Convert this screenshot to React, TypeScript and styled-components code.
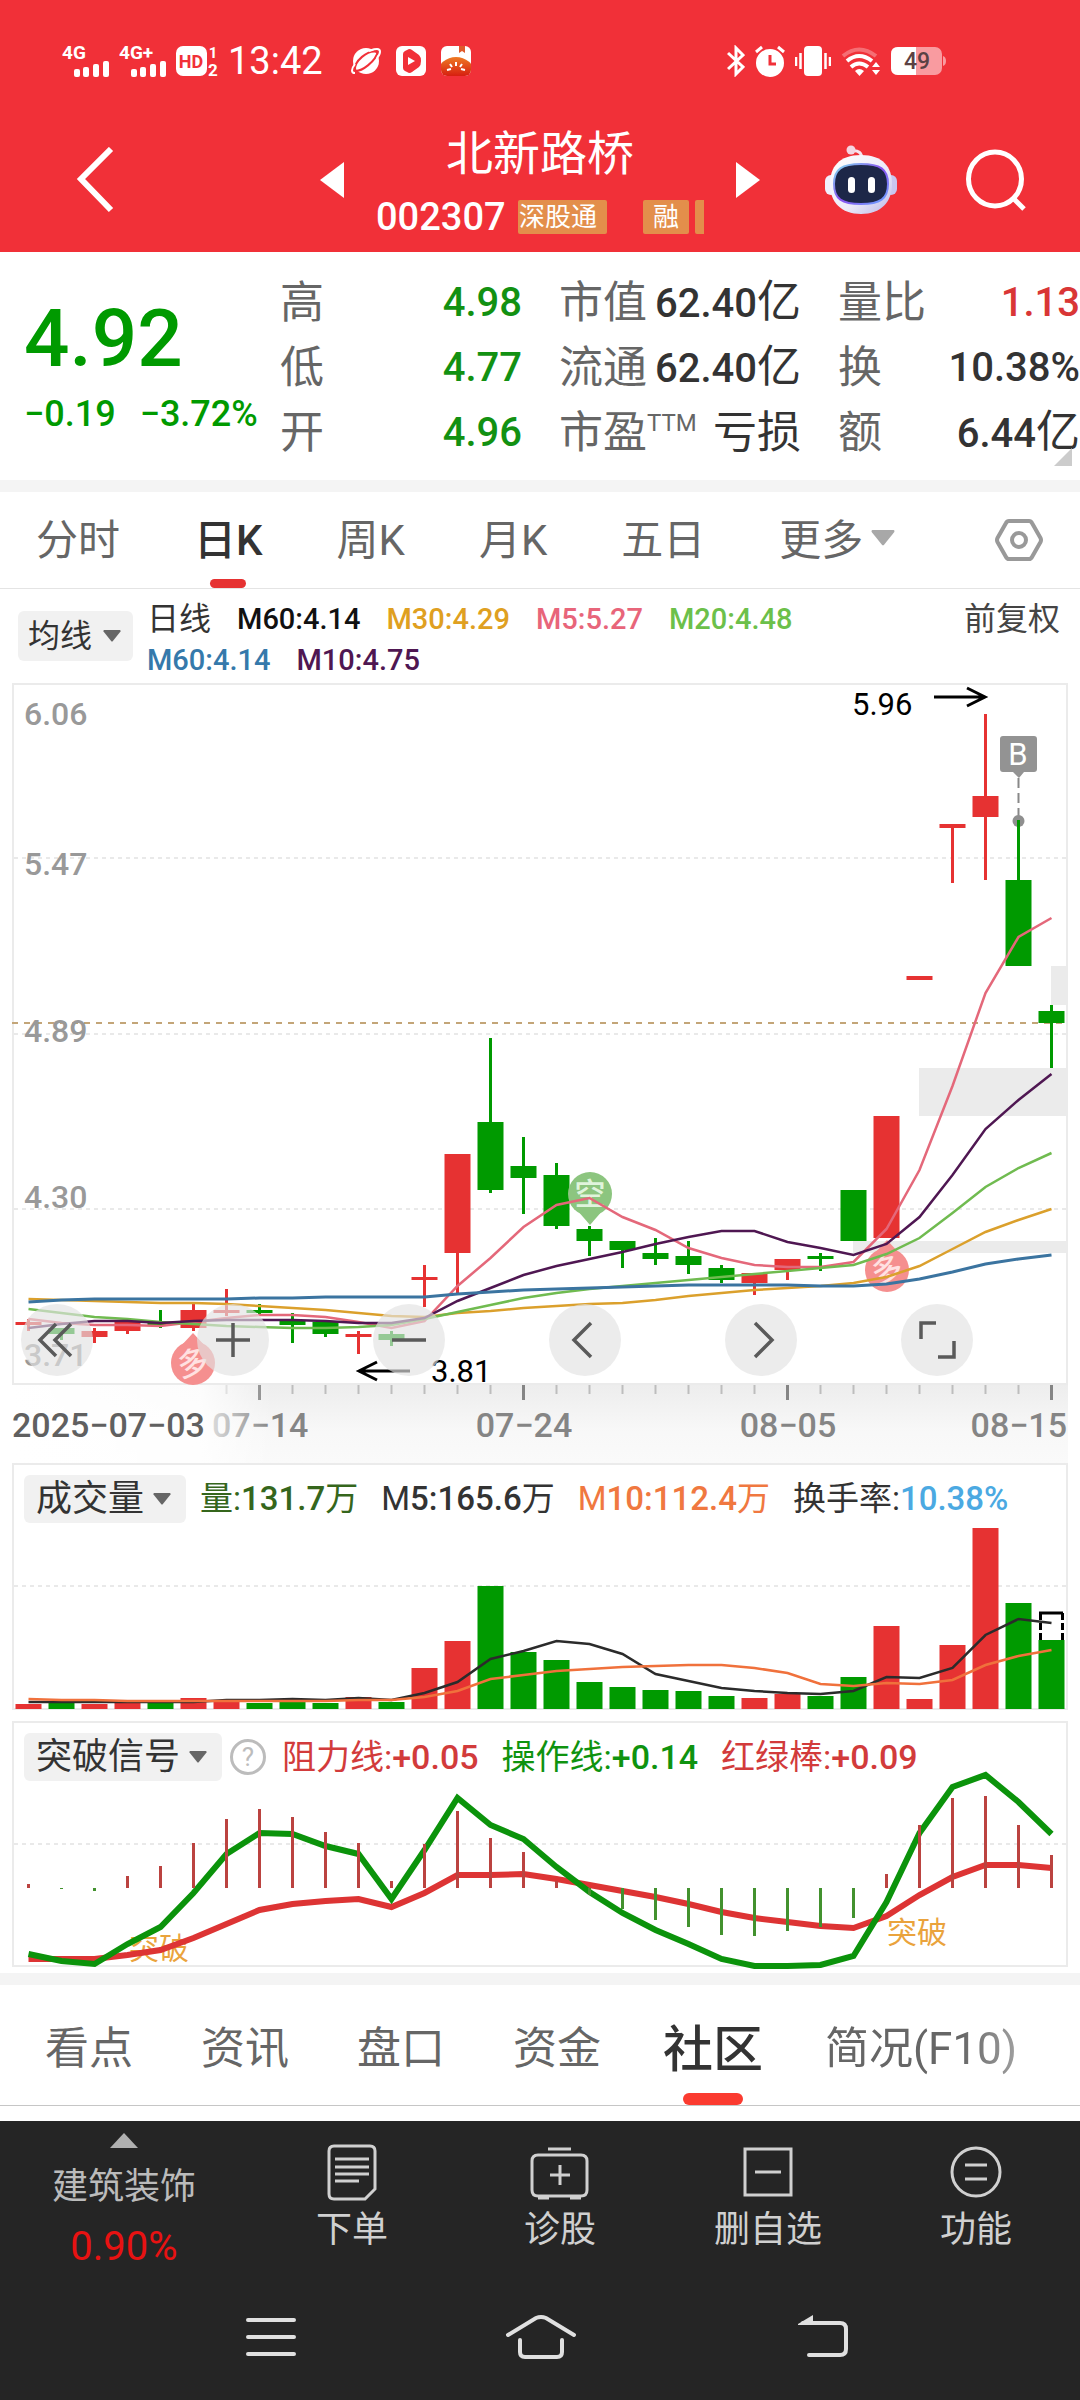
import React from 'react';
import styled, { createGlobalStyle, css } from 'styled-components';

const RED = '#e63232';
const GREEN = '#009a00';
const INK = '#333333';
const MUTED = '#666666';

const GlobalStyle = createGlobalStyle`
  *, *::before, *::after { box-sizing: border-box; }
  body {
    margin: 0;
    background: #ffffff;
    color: ${INK};
    font-family: Roboto, 'Noto Sans CJK SC', sans-serif;
  }
  h1, dl, dd, dt, ul, p { margin: 0; padding: 0; }
  ul { list-style: none; }
  svg { display: block; flex: none; }
`;

const plainButton = css`
  display: flex;
  align-items: center;
  justify-content: center;
  margin: 0;
  padding: 0;
  border: 0;
  background: none;
  color: inherit;
  font: inherit;
  cursor: pointer;
`;

const IconButton = styled.button`
  ${plainButton}
`;

/* ---------- header ---------- */

const Header = styled.header`
  background: #f13038;
  color: #ffffff;
`;

const StatusBar = styled.div`
  display: flex;
  align-items: center;
  justify-content: space-between;
  height: 122px;
  padding: 0 134px 0 62px;
`;

const StatusGroup = styled.div`
  display: flex;
  align-items: center;
  gap: 10px;
`;

const AppIcons = styled.div`
  display: flex;
  gap: 15px;
  margin-left: 18px;
`;

const Clock = styled.time`
  font-size: 38px;
  line-height: 46px;
`;

const TitleBar = styled.div`
  display: grid;
  grid-template-columns: 1fr auto 1fr;
  align-items: center;
  height: 130px;
  padding: 0 54px 14px 76px;
`;

const StockSwitch = styled.div`
  display: flex;
  align-items: center;
  gap: 32px;
  margin-left: -22px;
`;

const StockInfo = styled.div`
  display: flex;
  flex-direction: column;
  gap: 12px;
  width: 328px;
  margin-bottom: -6px;
`;

const StockName = styled.h1`
  font-size: 47px;
  font-weight: 400;
  line-height: 56px;
  text-align: center;
`;

const CodeRow = styled.div`
  display: flex;
  align-items: center;
  height: 46px;
  overflow: hidden;
`;

const Code = styled.span`
  flex: none;
  width: 142px;
  font-size: 38px;
  font-weight: 500;
  line-height: 46px;
`;

const Tag = styled.span<{ $flush?: boolean }>`
  flex: none;
  height: 34px;
  margin-right: ${(p) => (p.$flush ? 36 : 6)}px;
  padding: 0 10px 0 ${(p) => (p.$flush ? 1 : 10)}px;
  border-radius: 2px;
  background: #e38e4b;
  font-size: 26px;
  line-height: 34px;
`;

const HeaderActions = styled.div`
  display: flex;
  align-items: center;
  justify-content: flex-end;
  gap: 68px;
`;

/* ---------- quote ---------- */

const Quote = styled.section`
  position: relative;
  display: grid;
  grid-template-columns: 280px 1fr;
  height: 228px;
`;

const PriceBlock = styled.div`
  padding: 47px 0 0 24px;
  color: ${GREEN};
  font-weight: 500;
  white-space: nowrap;
`;

const Price = styled.p`
  font-size: 80px;
  line-height: 80px;
`;

const Change = styled.p`
  display: flex;
  gap: 24px;
  margin-top: 13px;
  font-size: 36px;
  line-height: 44px;
`;

const Stats = styled.dl`
  display: grid;
  grid-template-columns: repeat(3, 1fr);
  grid-auto-rows: 65px;
  column-gap: 37px;
  padding-top: 18px;
`;

const Stat = styled.div`
  display: flex;
  align-items: center;
  justify-content: space-between;
  white-space: nowrap;
`;

const StatLabel = styled.dt`
  display: flex;
  color: ${MUTED};
  font-size: 44px;
  line-height: 66px;
`;

const Small = styled.small`
  font-size: 24px;
  line-height: 46px;
`;

const StatValue = styled.dd<{ $color?: string; $plain?: boolean }>`
  color: ${(p) => p.$color ?? INK};
  font-size: ${(p) => (p.$plain ? 44 : 40)}px;
  font-weight: ${(p) => (p.$plain ? 400 : 500)};
  line-height: 66px;
`;

const Unit = styled.span`
  font-size: 44px;
  font-weight: 400;
`;

const Corner = styled.i`
  position: absolute;
  right: 8px;
  bottom: 14px;
  border: 9px solid #cccccc;
  border-top-color: transparent;
  border-left-color: transparent;
`;

const Band = styled.div`
  height: 12px;
  background: #f4f4f4;
`;

/* ---------- tabs ---------- */

const PeriodTabs = styled.nav`
  display: flex;
  align-items: stretch;
  gap: 74px;
  height: 97px;
  padding: 0 36px;
  border-bottom: 1px solid #e4e4e4;
`;

const PeriodTab = styled.button<{ $active?: boolean }>`
  ${plainButton}
  position: relative;
  gap: 8px;
  color: ${(p) => (p.$active ? INK : MUTED)};
  font-size: 42px;
  font-weight: ${(p) => (p.$active ? 500 : 400)};
  line-height: 98px;
  align-items: flex-start;
  svg { margin-top: 38px; }
  white-space: nowrap;
  &::after {
    content: '';
    display: ${(p) => (p.$active ? 'block' : 'none')};
    position: absolute;
    bottom: 0;
    left: calc(50% - 18px);
    width: 36px;
    height: 9px;
    border-radius: 5px;
    background: ${RED};
  }
`;

const Settings = styled(IconButton)`
  margin-left: auto;
`;

/* ---------- indicators ---------- */

const SelectBox = styled.label<{ $large?: boolean }>`
  position: relative;
  flex: none;
  height: ${(p) => (p.$large ? 48 : 50)}px;
  select {
    height: 100%;
    margin: 0;
    padding: ${(p) => (p.$large ? '0 41px 0 12px' : '0 40px 0 10px')};
    border: 0;
    border-radius: 6px;
    appearance: none;
    background: #f1f1f1;
    color: ${INK};
    font: inherit;
    font-size: ${(p) => (p.$large ? 36 : 32)}px;
  }
  svg {
    position: absolute;
    top: calc(50% - 6px);
    right: ${(p) => (p.$large ? 15 : 12)}px;
    pointer-events: none;
  }
`;

const Averages = styled.section`
  display: flex;
  align-items: flex-start;
  height: 94px;
  padding: 10px 20px 0 18px;
`;

const AverageSelect = styled.div`
  display: flex;
  padding-top: 12px;
`;

const Legend = styled.ul`
  display: flex;
  flex: 1;
  flex-wrap: wrap;
  column-gap: 26px;
  margin: 0 48px 0 14px;
`;

const LegendItem = styled.li<{ $color: string }>`
  color: ${(p) => p.$color};
  font-size: ${(p) => (p.$color === INK ? 32 : 29)}px;
  font-weight: ${(p) => (p.$color === INK ? 400 : 500)};
  line-height: 41px;
`;

const Adjust = styled.button`
  ${plainButton}
  color: #444444;
  font-size: 32px;
  line-height: 41px;
`;

const Frame = styled.section`
  position: relative;
  margin: 0 12px;
  border: 2px solid #ebebeb;
`;

const Plot = styled.svg`
  width: 100%;
  height: auto;
  overflow: visible;
`;

const Axis = styled.div`
  margin: 0 12px;
`;

const Tools = styled.div`
  position: absolute;
  left: 7px;
  right: 93px;
  bottom: 7px;
  display: flex;
  justify-content: space-between;
`;

const Tool = styled.button`
  ${plainButton}
  width: 72px;
  height: 72px;
  border-radius: 50%;
  background: rgba(226, 226, 226, 0.66);
`;

const PanelHead = styled.div`
  display: flex;
  align-items: center;
  height: 62px;
  padding: 6px 10px 0;
`;

const PanelValues = styled.ul<{ $size: number }>`
  display: flex;
  gap: 23px;
  margin-left: 14px;
  font-size: ${(p) => p.$size}px;
  line-height: 50px;
  white-space: nowrap;
`;

const PanelValue = styled.li<{ $color: string }>`
  color: ${(p) => p.$color};
  b { font-weight: 500; }
`;

const PercentText = styled.b`
  color: #4ba9e2;
`;

const Help = styled(IconButton)`
  width: 36px;
  height: 36px;
  margin: 0 2px 0 8px;
  border: 3px solid #bcbcbc;
  border-radius: 50%;
  color: #bcbcbc;
  font-size: 26px;
  line-height: 30px;
`;

const Panel = styled(Frame)<{ $space: number }>`
  margin-bottom: ${(p) => p.$space}px;
`;

/* ---------- bottom ---------- */

const InfoTabs = styled.nav`
  display: flex;
  height: 121px;
  padding-left: 11px;
  border-bottom: 1px solid #c6c6c6;
  overflow: hidden;
`;

const InfoTab = styled.button<{ $active?: boolean; $fade?: boolean }>`
  ${plainButton}
  position: relative;
  flex: none;
  padding: 0 ${(p) => (p.$active ? 28 : 34)}px;
  color: ${(p) => (p.$active ? INK : MUTED)};
  font-size: ${(p) => (p.$active ? 50 : 44)}px;
  font-weight: ${(p) => (p.$active ? 500 : 400)};
  mask-image: ${(p) => (p.$fade ? 'linear-gradient(to right, #000 65%, rgba(0, 0, 0, 0.4))' : 'none')};
  &::after {
    content: '';
    display: ${(p) => (p.$active ? 'block' : 'none')};
    position: absolute;
    bottom: 0;
    left: calc(50% - 30px);
    width: 60px;
    height: 12px;
    border-radius: 6px;
    background: #fb3b30;
  }
`;

const Footer = styled.footer`
  margin-top: 15px;
  background: #252525;
  color: #d0d0d0;
`;

const Actions = styled.div`
  display: grid;
  grid-template-columns: 248px repeat(4, 1fr);
  height: 159px;
`;

const Sector = styled.button`
  ${plainButton}
  flex-direction: column;
  justify-content: flex-start;
  padding: 12px 0 0;
  color: #bbbbbb;
  font-size: 36px;
  line-height: 60px;
  svg { margin-bottom: 9px; }
`;

const SectorChange = styled.span`
  color: #e81212;
  font-size: 40px;
`;

const Action = styled.button`
  ${plainButton}
  flex-direction: column;
  justify-content: flex-start;
  gap: 2px;
  padding-top: 20px;
  font-size: 36px;
  line-height: 54px;
`;

const SystemBar = styled.div`
  display: flex;
  align-items: center;
  justify-content: center;
  gap: 198px;
  height: 120px;
  padding: 0 0 6px 14px;
`;

/* ---------- chart data ---------- */

const STEP = 33;
const FIRST = 28.5;
const px = (i: number) => FIRST + STEP * i;
const points = (ys: number[]) => ys.map((y, i) => `${px(i)},${y}`).join(' ');

// [rising, body top, body bottom, high, low]
const candles: [number, number, number, number, number][] = [
  [1, 1322, 1325, 1319, 1331], [0, 1328, 1334, 1328, 1340], [1, 1331, 1337, 1328, 1343],
  [1, 1322, 1331, 1322, 1334], [0, 1322, 1325, 1310, 1328], [1, 1310, 1328, 1304, 1331],
  [1, 1310, 1313, 1289, 1316], [0, 1310, 1313, 1304, 1315], [0, 1321, 1325, 1313, 1343],
  [0, 1322, 1334, 1322, 1337], [1, 1334, 1337, 1331, 1354], [0, 1334, 1340, 1331, 1346],
  [1, 1277, 1280, 1265, 1307], [1, 1154, 1253, 1154, 1293], [0, 1122, 1190, 1038, 1193],
  [0, 1166, 1178, 1137, 1214], [0, 1175, 1226, 1163, 1229], [0, 1229, 1241, 1226, 1256],
  [0, 1241, 1250, 1241, 1268], [0, 1253, 1259, 1238, 1265], [0, 1256, 1265, 1241, 1274],
  [0, 1268, 1280, 1265, 1283], [1, 1273, 1283, 1273, 1295], [1, 1259, 1270, 1259, 1280],
  [0, 1256, 1259, 1253, 1271], [0, 1190, 1241, 1190, 1241], [1, 1116, 1238, 1116, 1238],
  [1, 976, 980, 976, 980], [1, 824, 828, 824, 883], [1, 796, 817, 714, 880],
  [0, 880, 966, 820, 966], [0, 1011, 1023, 1005, 1068],
];

const ma5 = [1319, 1323, 1325, 1325, 1326, 1322, 1318, 1315, 1315, 1317, 1322, 1328, 1321, 1286, 1258, 1227, 1205, 1198, 1217, 1230, 1248, 1258, 1265, 1267, 1267, 1262, 1229, 1170, 1086, 993, 937, 918];
const ma10 = [1328, 1324, 1321, 1321, 1323, 1321, 1320, 1320, 1320, 1321, 1323, 1323, 1318, 1301, 1288, 1275, 1266, 1259, 1252, 1244, 1237, 1231, 1231, 1242, 1248, 1255, 1244, 1217, 1175, 1129, 1100, 1074];
const ma20 = [1309, 1313, 1317, 1319, 1322, 1324, 1326, 1327, 1328, 1328, 1327, 1325, 1319, 1312, 1305, 1298, 1293, 1289, 1286, 1283, 1280, 1277, 1274, 1271, 1268, 1265, 1254, 1238, 1213, 1187, 1168, 1153];
const ma30 = [1299, 1300, 1301, 1302, 1303, 1303, 1304, 1306, 1308, 1310, 1313, 1316, 1317, 1313, 1311, 1308, 1306, 1304, 1303, 1300, 1296, 1293, 1290, 1288, 1286, 1283, 1277, 1266, 1249, 1232, 1220, 1209];
const ma60 = [1302, 1300, 1299, 1299, 1299, 1299, 1299, 1298, 1298, 1297, 1297, 1297, 1297, 1294, 1292, 1290, 1289, 1288, 1287, 1286, 1285, 1285, 1285, 1285, 1286, 1286, 1284, 1279, 1272, 1264, 1259, 1255];

const volumes = [1704, 1703, 1704, 1703, 1703, 1698, 1702, 1703, 1702, 1703, 1697, 1702, 1668, 1641, 1586, 1652, 1660, 1682, 1687, 1690, 1691, 1696, 1698, 1694, 1696, 1677, 1626, 1699, 1645, 1528, 1603, 1640];
const vol5 = [1702, 1702, 1702, 1702, 1702, 1702, 1700, 1700, 1699, 1700, 1698, 1700, 1693, 1682, 1659, 1651, 1641, 1644, 1654, 1674, 1681, 1688, 1691, 1693, 1694, 1691, 1677, 1678, 1668, 1635, 1619, 1623];
const vol10 = [1699, 1700, 1700, 1701, 1701, 1701, 1701, 1701, 1701, 1701, 1700, 1700, 1697, 1691, 1679, 1675, 1671, 1669, 1667, 1666, 1665, 1665, 1668, 1673, 1684, 1686, 1683, 1684, 1680, 1665, 1656, 1650];

const sticks = [1884, 1889, 1891, 1876, 1866, 1843, 1819, 1809, 1817, 1832, 1843, 1881, 1844, 1811, 1838, 1852, 1881, 1895, 1909, 1920, 1927, 1935, 1936, 1931, 1927, 1918, 1874, 1825, 1798, 1796, 1825, 1855];
const operate = [1954, 1961, 1964, 1944, 1927, 1893, 1854, 1833, 1834, 1846, 1854, 1899, 1850, 1798, 1825, 1839, 1867, 1892, 1913, 1930, 1944, 1959, 1966, 1966, 1965, 1956, 1902, 1833, 1787, 1775, 1802, 1834];
const resist = [1959, 1959, 1959, 1955, 1950, 1938, 1924, 1910, 1904, 1901, 1899, 1907, 1893, 1875, 1875, 1874, 1879, 1885, 1891, 1897, 1904, 1912, 1918, 1922, 1926, 1928, 1916, 1895, 1877, 1865, 1865, 1868];
const ZERO = 1888;

/* ---------- parts ---------- */

const Down = ({ size = 18, color = '#666666' }) => (
  <svg width={size} height={(size * 2) / 3} viewBox="0 0 18 12" aria-hidden="true">
    <path d="M1 0h16q1 0.500 0.500 1.500L9.500 11.500h-1L0.500 1.500Q0 0.500 1 0z" fill={color} />
  </svg>
);

const Picker = ({ text, label, large }: { text: string; label: string; large?: boolean }) => (
  <SelectBox $large={large}>
    <select aria-label={label} defaultValue={text}>
      <option>{text}</option>
    </select>
    <Down />
  </SelectBox>
);

const Signal = ({ text }: { text: string }) => (
  <svg width="47" height="48" viewBox="0 -8 47 48" fill="#fff">
    <text x="0" y="14" fontSize="19" fontWeight="700">{text}</text>
    <rect x="12" y="24" width="6" height="8" rx="2" />
    <rect x="21" y="22" width="6" height="10" rx="2" />
    <rect x="31" y="19" width="6" height="13" rx="2" />
    <rect x="41" y="16" width="6" height="16" rx="2" />
  </svg>
);

const Status = () => (
  <StatusBar>
    <StatusGroup>
      <Signal text="4G" />
      <Signal text="4G+" />
      <svg width="42" height="48" viewBox="0 -8 42 48">
        <rect y="1" width="31" height="30" rx="7" fill="#fff" />
        <text x="15" y="23" fontSize="18" fontWeight="700" textAnchor="middle" fill="#f13038">HD</text>
        <text x="37" y="13" fontSize="15" fontWeight="700" textAnchor="middle" fill="#fff">1</text>
        <text x="37" y="31" fontSize="17" fontWeight="700" textAnchor="middle" fill="#fff">2</text>
      </svg>
      <Clock>13:42</Clock>
      <AppIcons>
        <svg width="30" height="30" viewBox="0 0 30 30">
          <circle cx="15" cy="15" r="13" fill="#fff" />
          <path d="M4 24C3 16 16 3 27 6" fill="none" stroke="#f13038" strokeWidth="2" />
          <path d="M3 25c8 1 22-10 24-20" fill="none" stroke="#f13038" strokeWidth="2" />
          <path d="M4 18C0 23 0 27 4 27M26 12c4-5 4-9 0-9-4 0-5 1-8 2" fill="none" stroke="#fff" strokeWidth="2" />
        </svg>
        <svg width="30" height="30" viewBox="0 0 30 30">
          <rect width="30" height="30" rx="6" fill="#fff" />
          <path d="M7 8q0-2 2-3l4-2q2 0 3 1l7 5q2 2 2 6t-2 6l-7 5q-1 1-3 1l-4-2q-2-1-2-3z" fill="#f13038" />
          <path d="M12 11l7 4-7 4z" fill="#fff" />
        </svg>
        <svg width="30" height="30" viewBox="0 0 30 30">
          <defs>
            <linearGradient id="tomato" x1="0" y1="0" x2="0" y2="1">
              <stop offset="0" stopColor="#ee7a24" />
              <stop offset="0.700" stopColor="#d4150e" />
            </linearGradient>
            <clipPath id="appTile"><rect width="30" height="30" rx="6" /></clipPath>
          </defs>
          <g clipPath="url(#appTile)">
            <rect width="30" height="30" fill="#fff" />
            <ellipse cx="15" cy="26" rx="18" ry="15" fill="url(#tomato)" />
            <path d="M18 0h6v7l-3-2-3 2z" fill="#e0592b" />
            <path d="M15 16v4M9 18l2 3M21 18l-2 3M6 24l4-1M24 24l-4-1" stroke="#fff" strokeWidth="2" />
          </g>
        </svg>
      </AppIcons>
    </StatusGroup>
    <StatusGroup>
      <svg width="18" height="32" viewBox="0 0 18 32" fill="none" stroke="#fff" strokeWidth="3">
        <path d="M1 8l15 14-7 7V3l7 7L1 24" />
      </svg>
      <svg width="30" height="32" viewBox="0 0 30 32">
        <circle cx="15" cy="18" r="14" fill="#fff" />
        <path d="M1 7l6-5M29 7l-6-5" stroke="#fff" strokeWidth="3" />
        <path d="M15 10v9h6" fill="none" stroke="#f13038" strokeWidth="3" />
      </svg>
      <svg width="36" height="32" viewBox="0 0 36 32" fill="#fff">
        <rect x="9" y="1" width="18" height="30" rx="4" />
        <path d="M1 12v9M5.500 8v16M30.500 8v16M35 12v9" stroke="#fff" strokeWidth="2.500" />
      </svg>
      <svg width="40" height="32" viewBox="0 0 40 32" fill="none" stroke="#fff" strokeWidth="4">
        <path d="M2 11q16-13 33 0" opacity="0.300" />
        <path d="M6 16q12-10 25 0M10 22q8-7 17 0" />
        <path d="M14 26q4-4 9 0l-4.500 5z" fill="#fff" stroke="none" />
        <path d="M31 22l4-5 4 5zM31 25l4 5 4-5z" fill="#fff" stroke="none" />
      </svg>
      <svg width="55" height="28" viewBox="0 0 55 28">
        <rect width="51" height="28" rx="7" fill="#f99ba0" />
        <path d="M52 9q3 1 3 5t-3 5z" fill="#f99ba0" />
        <path d="M7 0h18v28H7q-7 0-7-7V7q0-7 7-7z" fill="#fff" />
        <text x="26" y="22" fontSize="23" fontWeight="500" textAnchor="middle" fill="#5c4144">49</text>
      </svg>
    </StatusGroup>
  </StatusBar>
);

const Robot = () => (
  <svg width="74" height="70" viewBox="0 0 74 70">
    <defs>
      <linearGradient id="shell" x1="0" y1="0" x2="1" y2="1">
        <stop offset="0" stopColor="#ffffff" />
        <stop offset="0.600" stopColor="#eceaf8" />
        <stop offset="1" stopColor="#b9b6e8" />
      </linearGradient>
      <linearGradient id="rim" x1="0" y1="0" x2="1" y2="1">
        <stop offset="0" stopColor="#7fe0f0" />
        <stop offset="0.500" stopColor="#8a4ff0" />
        <stop offset="1" stopColor="#6aa8ff" />
      </linearGradient>
    </defs>
    <path d="M27 6q11-2 11 9" fill="none" stroke="#f6e3ee" strokeWidth="3" />
    <circle cx="27" cy="5" r="4.500" fill="#f4d5e2" />
    <rect x="1" y="30" width="12" height="20" rx="6" fill="#f1effc" />
    <rect x="61" y="30" width="12" height="20" rx="6" fill="#c9c6ef" />
    <path d="M37 10c22 0 31 12 31 29 0 18-11 30-31 30S6 57 6 39c0-17 9-29 31-29z" fill="url(#shell)" />
    <path d="M37 19c19 0 27 5 27 20s-8 20-27 20-27-5-27-20 8-20 27-20z" fill="#1d2748" stroke="url(#rim)" strokeWidth="2" />
    <rect x="24" y="32" width="7" height="16" rx="3.500" fill="#fff" />
    <rect x="44" y="32" width="7" height="16" rx="3.500" fill="#fff" />
  </svg>
);

const Pin = ({ x, y, text, color, up }: { x: number; y: number; text: string; color: string; up?: boolean }) => (
  <g transform={`translate(${x} ${y})`}>
    <circle r="22" fill={color} />
    <path d={up ? 'M-13-16L0-30 13-16z' : 'M-13 16L0 31 13 16z'} fill={color} />
    <text
      y="11"
      fontSize="31"
      fontWeight="500"
      textAnchor="middle"
      fill={up ? '#ffe1e1' : '#e0f4dc'}
      transform={up ? 'rotate(-14)' : undefined}
    >
      {text}
    </text>
  </g>
);

const Grid = ({ y }: { y: number }) => (
  <line x1="14" x2="1066" y1={y} y2={y} stroke="#e9e9e9" strokeWidth="2" strokeDasharray="4 4" />
);

const PriceChart = () => (
  <Plot viewBox="14 685 1052 698" role="img" aria-label="日K线图">
    <Grid y={858} />
    <Grid y={1034} />
    <Grid y={1209} />
    <g fill="#ebebeb">
      <rect x="1051" y="966" width="17" height="39" />
      <rect x="919" y="1068" width="149" height="48" />
      <rect x="853" y="1241" width="215" height="12" />
    </g>
    <line x1="12" x2="1066" y1="1023" y2="1023" stroke="#c3a578" strokeWidth="2" strokeDasharray="6 6" />
    <g fontSize="32" fontWeight="500" fill="#999999">
      <text x="24" y="725">6.06</text>
      <text x="24" y="875">5.47</text>
      <text x="24" y="1042">4.89</text>
      <text x="24" y="1208">4.30</text>
      <text x="24" y="1366">3.71</text>
    </g>
    <line x1="1018.500" x2="1018.500" y1="778" y2="820" stroke="#888888" strokeWidth="2" strokeDasharray="10 5" />
    <circle cx="1018.500" cy="821" r="6" fill="#8f8f8f" />
    {candles.map(([up, top, bottom, high, low], i) => (
      <g key={i} fill={up ? RED : GREEN}>
        <rect x={px(i) - 1.5} y={high} width="3" height={low - high} />
        <rect x={px(i) - 13} y={top} width="26" height={bottom - top} />
      </g>
    ))}
    <Pin x={193} y={1363} text="多" color="#f58f8f" up />
    <Pin x={887} y={1270} text="多" color="#f58f8f" up />
    <Pin x={590} y={1194} text="空" color="#8cc57f" />
    <g fill="none" strokeWidth="2.500">
      <polyline points={points(ma30)} stroke="#dba02c" />
      <polyline points={points(ma5)} stroke="#e4687a" />
      <polyline points={points(ma20)} stroke="#70bb50" />
      <polyline points={points(ma10)} stroke="#4f1752" />
      <polyline points={points(ma60)} stroke="#3b74a0" strokeWidth="3" />
    </g>
    <g fontSize="31" fill="#000">
      <text x="852" y="715">5.96</text>
      <text x="431" y="1382">3.81</text>
    </g>
    <path d="M934 697h50M967 688l18 9-18 9M410 1371h-50M377 1362l-18 9 18 9" fill="none" stroke="#000" strokeWidth="3" />
    <path d="M1003 736h31q3 0 3 3v30q0 3-3 3h-10l-5 6-6-6h-10q-3 0-3-3v-30q0-3 3-3z" fill="#939393" />
    <text x="1018" y="765" fontSize="31" textAnchor="middle" fill="#fff">B</text>
  </Plot>
);

const toolIcons: { label: string; d: string }[] = [
  { label: '最左', d: 'M19 4L3 20l16 16M34 4L18 20l16 16' },
  { label: '放大', d: 'M3 20h34M20 3v34' },
  { label: '缩小', d: 'M3 20h34' },
  { label: '左移', d: 'M26 3L9 20l17 17' },
  { label: '右移', d: 'M14 3l17 17-17 17' },
  { label: '全屏', d: 'M4 19V3h15M37 21v16H21' },
];

const TimeAxis = () => (
  <Axis>
    <Plot viewBox="12 1385 1056 78" role="img" aria-label="日期">
      <defs>
        <linearGradient id="shade" x1="0" y1="0" x2="0" y2="1">
          <stop offset="0" stopColor="#ededed" />
          <stop offset="0.600" stopColor="#f8f8f8" />
          <stop offset="1" stopColor="#fafafa" />
        </linearGradient>
        <linearGradient id="veil" x1="0" y1="0" x2="1" y2="0">
          <stop offset="0" stopColor="#fff" />
          <stop offset="0.720" stopColor="#fff" stopOpacity="0.850" />
          <stop offset="1" stopColor="#fff" stopOpacity="0" />
        </linearGradient>
      </defs>
      <rect x="12" y="1385" width="1056" height="78" fill="url(#shade)" />
      {candles.map((_, i) => {
        const major = i % 8 === 7;
        return i < 6 ? null : (
          <rect key={i} x={px(i) - (major ? 1.5 : 1)} y="1385" width={major ? 3 : 2} height={major ? 15 : 9} fill={major ? '#858585' : '#bdbdbd'} />
        );
      })}
      <g fontSize="34" fontWeight="500" fill="#858585">
        <text x="212" y="1437">07−14</text>
        <text x="524" y="1437" textAnchor="middle">07−24</text>
        <text x="788" y="1437" textAnchor="middle">08−05</text>
        <text x="1067" y="1437" textAnchor="end">08−15</text>
      </g>
      <rect x="12" y="1385" width="260" height="78" fill="url(#veil)" />
      <text x="12" y="1437" fontSize="34" fontWeight="500" fill="#606060">2025−07−03</text>
    </Plot>
  </Axis>
);

const averages: [string, string][] = [
  ['日线', INK],
  ['M60:4.14', '#111111'],
  ['M30:4.29', '#dfa021'],
  ['M5:5.27', '#e8657a'],
  ['M20:4.48', '#6cc04a'],
  ['M60:4.14', '#3579ab'],
  ['M10:4.75', '#4f1752'],
];

const stats: { label: string; value: string; unit?: string; color?: string; note?: string; plain?: boolean }[] = [
  { label: '高', value: '4.98', color: '#129112' },
  { label: '市值', value: '62.40', unit: '亿' },
  { label: '量比', value: '1.13', color: '#d93636' },
  { label: '低', value: '4.77', color: '#129112' },
  { label: '流通', value: '62.40', unit: '亿' },
  { label: '换', value: '10.38%' },
  { label: '开', value: '4.96', color: '#129112' },
  { label: '市盈', value: '亏损', note: 'TTM', plain: true },
  { label: '额', value: '6.44', unit: '亿' },
];

export default function App() {
  return (
    <>
      <GlobalStyle />
      <Header>
        <Status />
        <TitleBar>
          <div>
            <IconButton aria-label="返回">
              <svg width="38" height="66" viewBox="0 0 38 66" fill="none" stroke="#fff" strokeWidth="6">
                <path d="M35 2L5 32l30 31" />
              </svg>
            </IconButton>
          </div>
          <StockSwitch>
            <IconButton aria-label="上一只">
              <svg width="24" height="38" viewBox="0 0 24 38"><path d="M24 1v36L0 19z" fill="#fff" /></svg>
            </IconButton>
            <StockInfo>
              <StockName>北新路桥</StockName>
              <CodeRow>
                <Code>002307</Code>
                <Tag $flush>深股通</Tag>
                <Tag>融</Tag>
                <Tag />
              </CodeRow>
            </StockInfo>
            <IconButton aria-label="下一只">
              <svg width="24" height="38" viewBox="0 0 24 38"><path d="M0 1v36l24-18z" fill="#fff" /></svg>
            </IconButton>
          </StockSwitch>
          <HeaderActions>
            <IconButton aria-label="智能助手"><Robot /></IconButton>
            <IconButton aria-label="搜索">
              <svg width="60" height="62" viewBox="0 0 60 62" fill="none" stroke="#fff" strokeWidth="5">
                <ellipse cx="29" cy="30" rx="26.500" ry="27" />
                <path d="M47 49l11 11" />
              </svg>
            </IconButton>
          </HeaderActions>
        </TitleBar>
      </Header>

      <main>
        <Quote>
          <PriceBlock>
            <Price>4.92</Price>
            <Change><span>−0.19</span><span>−3.72%</span></Change>
          </PriceBlock>
          <Stats>
            {stats.map((s) => (
              <Stat key={s.label}>
                <StatLabel>{s.label}{s.note && <Small>{s.note}</Small>}</StatLabel>
                <StatValue $color={s.color} $plain={s.plain}>{s.value}{s.unit && <Unit>{s.unit}</Unit>}</StatValue>
              </Stat>
            ))}
          </Stats>
          <Corner />
        </Quote>
        <Band />

        <PeriodTabs>
          <PeriodTab>分时</PeriodTab>
          <PeriodTab $active>日K</PeriodTab>
          <PeriodTab>周K</PeriodTab>
          <PeriodTab>月K</PeriodTab>
          <PeriodTab>五日</PeriodTab>
          <PeriodTab>更多<Down size={24} color="#a8a8a8" /></PeriodTab>
          <Settings aria-label="设置">
            <svg width="50" height="44" viewBox="0 0 50 44" fill="none" stroke="#999999" strokeWidth="4">
              <path d="M15 3h20q2 0 3 2l8.500 15q1 2 0 4L38 39q-1 2-3 2H15q-2 0-3-2L3.500 24q-1-2 0-4L12 5q1-2 3-2z" />
              <circle cx="25" cy="22" r="7" />
            </svg>
          </Settings>
        </PeriodTabs>

        <Averages>
          <AverageSelect><Picker text="均线" label="主图指标" /></AverageSelect>
          <Legend>
            {averages.map(([text, color], i) => (
              <LegendItem key={i} $color={color}>{text}</LegendItem>
            ))}
          </Legend>
          <Adjust>前复权</Adjust>
        </Averages>

        <Frame>
          <PriceChart />
          <Tools>
            {toolIcons.map((t) => (
              <Tool key={t.label} aria-label={t.label}>
                <svg width="40" height="40" viewBox="0 0 40 40" fill="none" stroke="#5a5a5a" strokeWidth="3.500">
                  <path d={t.d} />
                </svg>
              </Tool>
            ))}
          </Tools>
        </Frame>
        <TimeAxis />

        <Panel $space={11}>
          <PanelHead>
            <Picker large text="成交量" label="副图指标一" />
            <PanelValues $size={33}>
              <PanelValue $color="#35661c">量:<b>131.7</b>万</PanelValue>
              <PanelValue $color={INK}>M<b>5:165.6</b>万</PanelValue>
              <PanelValue $color="#f07840">M<b>10:112.4</b>万</PanelValue>
              <PanelValue $color={INK}>换手率:<PercentText>10.38%</PercentText></PanelValue>
            </PanelValues>
          </PanelHead>
          <Plot viewBox="14 1527 1052 181" role="img" aria-label="成交量图">
            <Grid y={1586} />
            {volumes.map((y, i) => (
              <rect key={i} x={px(i) - 13} y={y} width="26" height={1709 - y} fill={candles[i][0] ? RED : GREEN} />
            ))}
            <path d="M1039 1613h24" stroke="#000" strokeWidth="3" />
            <path d="M1040.500 1613v27M1062.500 1613v27" stroke="#000" strokeWidth="3" strokeDasharray="7 3" />
            <g fill="none" strokeWidth="2.500">
              <polyline points={points(vol5)} stroke="#2b2b2b" />
              <polyline points={points(vol10)} stroke="#f0713c" />
            </g>
          </Plot>
        </Panel>

        <Panel $space={6}>
          <PanelHead>
            <Picker large text="突破信号" label="副图指标二" />
            <Help aria-label="指标说明">?</Help>
            <PanelValues $size={34}>
              <PanelValue $color="#d23b3b">阻力线:<b>+0.05</b></PanelValue>
              <PanelValue $color="#0f930f">操作线:<b>+0.14</b></PanelValue>
              <PanelValue $color="#d23b3b">红绿棒:<b>+0.09</b></PanelValue>
            </PanelValues>
          </PanelHead>
          <Plot viewBox="14 1785 1052 180" role="img" aria-label="突破信号图">
            <Grid y={1844} />
            <g fontSize="30" fill="#eaa33c">
              <text x="129" y="1959">突破</text>
              <text x="887" y="1943">突破</text>
            </g>
            <g fill="none" strokeWidth="6">
              <polyline points={points(resist)} stroke="#dd3434" />
              <polyline points={points(operate)} stroke="#0b930b" />
            </g>
            {sticks.map((y, i) => (
              <rect key={i} x={px(i) - 1.5} y={Math.min(y, ZERO)} width="3" height={Math.abs(y - ZERO)} fill={y < ZERO ? '#bb4340' : '#43922f'} />
            ))}
          </Plot>
        </Panel>
        <Band />

        <InfoTabs>
          <InfoTab>看点</InfoTab>
          <InfoTab>资讯</InfoTab>
          <InfoTab>盘口</InfoTab>
          <InfoTab>资金</InfoTab>
          <InfoTab $active>社区</InfoTab>
          <InfoTab $fade>简况(F10)</InfoTab>
        </InfoTabs>
      </main>

      <Footer>
        <Actions>
          <Sector>
            <svg width="28" height="15" viewBox="0 0 28 15"><path d="M14 0l14 15H0z" fill="#b0b0b0" /></svg>
            <span>建筑装饰</span>
            <SectorChange>0.90%</SectorChange>
          </Sector>
          <Action>
            <svg width="56" height="60" viewBox="0 0 56 60" fill="none" stroke="#d0d0d0" strokeWidth="3">
              <path d="M10 5h36q5 0 5 5v38L41 58H10q-5 0-5-5V10q0-5 5-5z" />
              <path d="M11 18h34M11 26h34M11 33h34M11 40h24" />
            </svg>
            下单
          </Action>
          <Action>
            <svg width="60" height="60" viewBox="0 0 60 60" fill="none" stroke="#d0d0d0" strokeWidth="3">
              <path d="M8 14h43q6 0 6 6v29q0 6-6 6H8q-6 0-6-6V20q0-6 6-6zM18 8h23M20 34h20M30 24v20" />
              <path d="M8 57h11M40 57h11" />
            </svg>
            诊股
          </Action>
          <Action>
            <svg width="56" height="60" viewBox="0 0 56 60" fill="none" stroke="#d0d0d0" strokeWidth="3">
              <path d="M5 8h46v46H5zM15 31h26" />
            </svg>
            删自选
          </Action>
          <Action>
            <svg width="56" height="60" viewBox="0 0 56 60" fill="none" stroke="#d0d0d0" strokeWidth="3">
              <circle cx="28" cy="31" r="24" />
              <path d="M17 24h22M17 38h22" />
            </svg>
            功能
          </Action>
        </Actions>
        <SystemBar>
          <IconButton aria-label="最近任务">
            <svg width="72" height="48" viewBox="0 0 72 48" stroke="#e0e0e0" strokeWidth="4" strokeLinecap="round">
              <path d="M13 7h46M13 24h46M13 41h46" />
            </svg>
          </IconButton>
          <IconButton aria-label="主屏幕">
            <svg width="72" height="48" viewBox="0 0 72 48" fill="none" stroke="#e0e0e0" strokeWidth="4" strokeLinecap="round">
              <path d="M3 22L31 5q5-2 10 0l28 17M15 27v12q0 5 5 5h32q5 0 5-5V27" />
            </svg>
          </IconButton>
          <IconButton aria-label="返回上级">
            <svg width="84" height="48" viewBox="0 0 84 48" fill="none" stroke="#e0e0e0" strokeWidth="4" strokeLinecap="round">
              <path d="M28 10h37q6 0 6 6v20q0 6-6 6H34" />
              <path d="M23 11L38 2v10H23z" fill="#e0e0e0" stroke="none" />
            </svg>
          </IconButton>
        </SystemBar>
      </Footer>
    </>
  );
}
